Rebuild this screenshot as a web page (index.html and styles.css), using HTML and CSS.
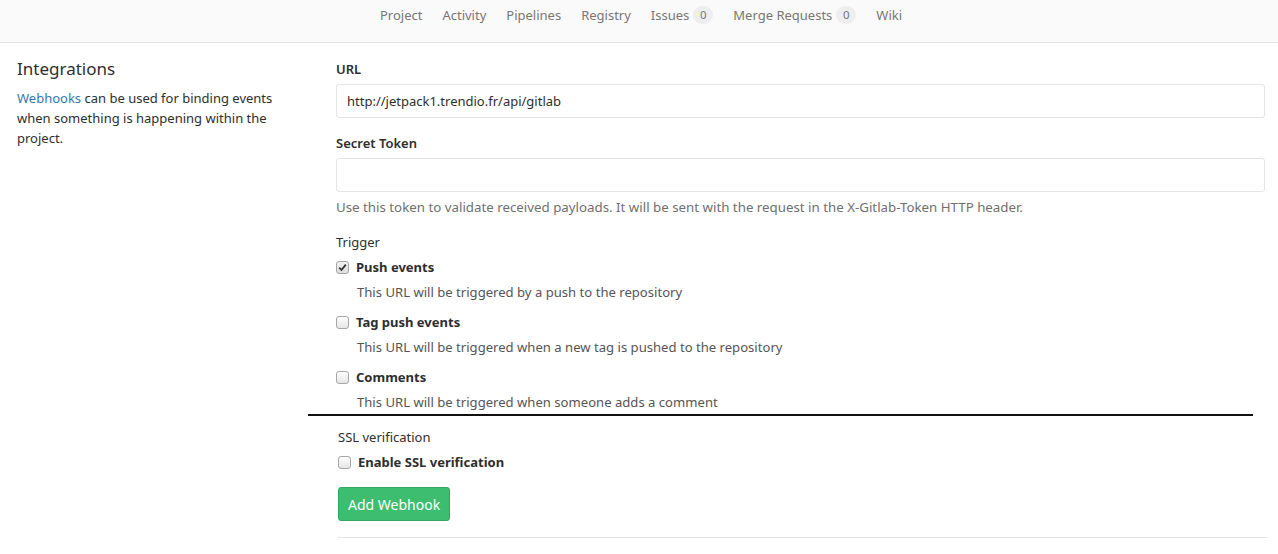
FILE: index.html
```html
<!DOCTYPE html>
<html lang="en">
<head>
<meta charset="utf-8">
<title>Integrations</title>
<link rel="stylesheet" href="styles.css">
</head>
<body>
<nav class="subnav">
  <span class="nav-item">Project</span>
  <span class="nav-item">Activity</span>
  <span class="nav-item">Pipelines</span>
  <span class="nav-item">Registry</span>
  <span class="nav-item">Issues <span class="badge">0</span></span>
  <span class="nav-item">Merge Requests <span class="badge">0</span></span>
  <span class="nav-item">Wiki</span>
</nav>
<main class="content">
  <aside class="side">
    <h4 class="side-title">Integrations</h4>
    <p class="side-text"><span class="link">Webhooks</span><span> can be used for binding events when something is happening within the project.</span></p>
  </aside>
  <section class="form">
    <div class="group">
      <label class="label">URL</label>
      <div class="input">http://jetpack1.trendio.fr/api/gitlab</div>
    </div>
    <div class="group">
      <label class="label">Secret Token</label>
      <div class="input"></div>
      <p class="help">Use this token to validate received payloads. It will be sent with the request in the X-Gitlab-Token HTTP header.</p>
    </div>
    <div class="group">
      <div class="label light">Trigger</div>
      <div class="check-row">
        <span class="box checked"><svg width="9" height="9" viewBox="0 0 9 9"><path d="M1.2 4.6 L3.5 7 L7.8 1.6" fill="none" stroke="#333" stroke-width="1.8"/></svg></span>
        <span class="check-label">Push events</span>
      </div>
      <p class="check-desc">This URL will be triggered by a push to the repository</p>
      <div class="check-row spaced">
        <span class="box"></span>
        <span class="check-label">Tag push events</span>
      </div>
      <p class="check-desc">This URL will be triggered when a new tag is pushed to the repository</p>
      <div class="check-row spaced">
        <span class="box"></span>
        <span class="check-label">Comments</span>
      </div>
      <p class="check-desc">This URL will be triggered when someone adds a comment</p>
    </div>
  </section>
</main>
<div class="divider"></div>
<section class="ssl">
  <div class="label light">SSL verification</div>
  <div class="check-row">
    <span class="box"></span>
    <span class="check-label">Enable SSL verification</span>
  </div>
  <button class="btn">Add Webhook</button>
  <div class="bottom-line"></div>
</section>
</body>
</html>
```
FILE: styles.css
```css
* { box-sizing: border-box; }
html, body { margin: 0; padding: 0; background: #fff; }
body {
  font-family: "Noto Sans", "Open Sans", sans-serif;
  font-size: 13px;
  color: #2e2e2e;
}
.subnav {
  height: 43px;
  background: #fafafa;
  border-bottom: 1px solid #e5e5e5;
  display: flex;
  justify-content: center;
  align-items: flex-start;
  padding: 5px 0 0 4px;
}
.nav-item {
  padding: 0 10px;
  color: #777;
  font-size: 13px;
  line-height: 20px;
  display: flex;
  align-items: center;
  gap: 4px;
}
.badge {
  background: #eee;
  color: #777;
  font-size: 11.5px;
  border-radius: 10px;
  height: 18px;
  min-width: 20px;
  padding: 0 6px;
  display: inline-flex;
  align-items: center;
  justify-content: center;
}
.content {
  display: grid;
  grid-template-columns: 320px 1fr;
  padding: 16px 13px 0 16px;
}
.side { padding-left: 1px; }
.side-title {
  margin: 0;
  font-size: 17px;
  font-weight: 400;
  line-height: 20px;
  color: #2e2e2e;
}
.side-text {
  margin: 9px 0 0;
  width: 275px;
  line-height: 20px;
  color: #2e2e2e;
}
.link { color: #3777b0; }
.group { margin-bottom: 15px; }
.group:last-child { margin-bottom: 0; }
.label {
  display: block;
  font-weight: 600;
  line-height: 20px;
  margin-bottom: 5px;
  font-size: 13px;
}
.label.light { font-weight: 400; }
.input {
  height: 34px;
  border: 1px solid #e5e5e5;
  border-radius: 3px;
  padding: 0 10px;
  display: flex;
  align-items: center;
  font-size: 13px;
  color: #2e2e2e;
}
.help {
  margin: 5px 0 0;
  line-height: 20px;
  color: #707070;
  font-size: 13.3px;
}
.check-row {
  display: flex;
  align-items: center;
  gap: 7px;
  line-height: 20px;
}
.check-row.spaced { margin-top: 10px; }
.box {
  width: 13px;
  height: 13px;
  border: 1px solid #a6a6a6;
  border-radius: 3px;
  background: linear-gradient(#fdfdfd, #e6e6e6);
  display: inline-flex;
  align-items: center;
  justify-content: center;
  flex: none;
}
.box.checked { background: linear-gradient(#f2f2f2, #dcdcdc); }
.check-label { font-weight: 700; }
.check-desc {
  margin: 5px 0 0 21px;
  line-height: 20px;
  color: #555;
  font-size: 13.1px;
}
.divider {
  margin: 2px 25px 0 308px;
  height: 2px;
  background: #111;
}
.ssl {
  padding: 11px 11px 0 338px;
}
.ssl .label { margin-bottom: 5px; }
.btn {
  margin-top: 15px;
  height: 34px;
  padding: 0 9px;
  background: #3cbd70;
  border: 1px solid #2faa60;
  border-radius: 3px;
  color: #fff;
  font-family: inherit;
  font-size: 14px;
  display: block;
}
.bottom-line {
  margin-top: 16px;
  height: 1px;
  background: #e5e5e5;
}
```
